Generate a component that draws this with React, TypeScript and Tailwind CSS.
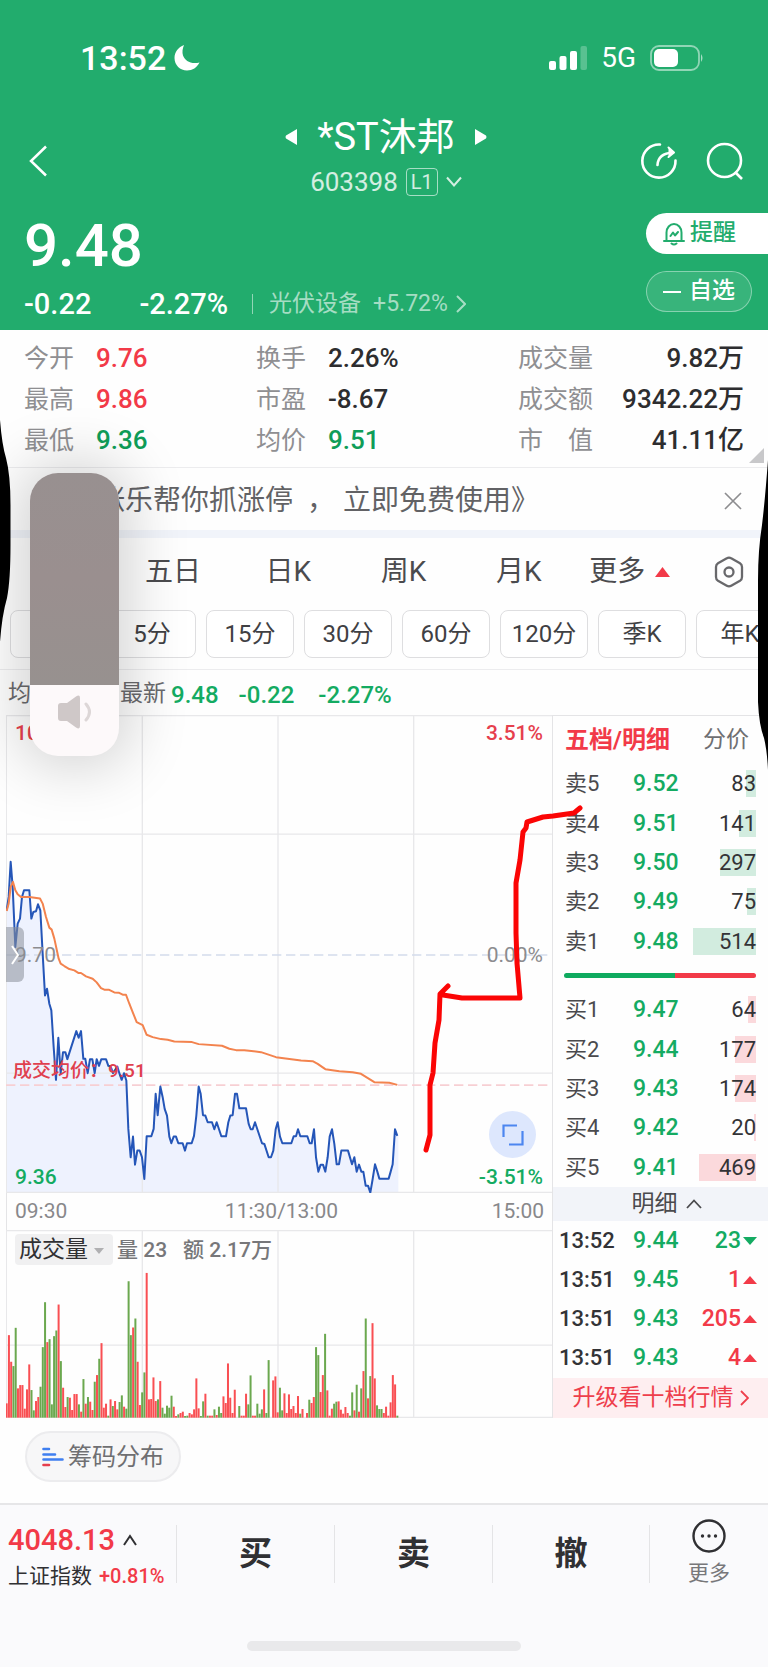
import React from "react";

const PRICE_POINTS =
  "22,630 28,590 34,485 40,560 48,740 55,670 62,655 68,590 74,570 90,570 96,655 102,635 110,633 116,612 123,630 130,760 137,885 143,865 150,910 156,930 163,1040 170,1138 177,1012 184,1118 191,1055 198,1055 204,1076 231,992 238,1012 245,992 252,1075 258,1075 265,1118 272,1076 279,1076 286,1118 292,1076 299,1096 306,1076 320,1076 327,1096 334,1098 341,1118 354,1098 360,1118 367,1138 374,1118 381,1140 387,1285 394,1370 401,1308 407,1392 414,1350 421,1350 428,1370 435,1435 442,1307 456,1307 463,1285 469,1180 475,1244 483,1158 490,1190 496,1225 503,1245 510,1308 516,1328 523,1308 530,1308 537,1328 550,1328 557,1350 563,1328 577,1328 584,1306 591,1245 598,1158 604,1180 611,1244 618,1245 625,1265 638,1265 645,1286 652,1265 666,1307 680,1307 687,1265 693,1245 700,1244 707,1180 713,1180 720,1223 740,1223 748,1270 754,1286 760,1286 767,1265 788,1328 795,1330 808,1370 815,1370 822,1350 829,1286 835,1265 842,1308 849,1328 876,1328 883,1307 890,1307 896,1286 903,1307 924,1307 931,1328 937,1328 944,1286 950,1370 957,1413 964,1392 971,1392 978,1413 985,1370 991,1308 998,1286 1005,1330 1012,1391 1019,1391 1026,1350 1046,1350 1058,1391 1065,1370 1072,1413 1079,1392 1086,1413 1092,1413 1099,1455 1106,1455 1113,1476 1120,1435 1127,1391 1134,1413 1140,1434 1168,1434 1174,1413 1180,1391 1187,1286 1194,1306";

const AVERAGE_POINTS =
  "22,632 28,610 34,560 41,545 48,570 55,582 65,590 90,590 122,595 130,610 140,650 150,682 157,688 165,715 178,775 184,790 195,797 210,806 225,810 238,818 245,818 260,828 280,835 292,846 305,863 315,868 328,868 345,876 358,877 370,883 380,883 390,910 400,935 412,965 430,974 442,1003 460,1010 485,1016 505,1018 525,1023 578,1025 598,1031 668,1036 690,1045 710,1049 735,1049 785,1055 830,1070 905,1080 940,1082 955,1090 978,1106 1020,1112 1060,1115 1085,1120 1125,1145 1170,1147 1194,1153";

// One entry per traded minute: direction (r = up, g = down) and bar height.
const VOLUMES =
  "r43 r248 r168 g155 g270 r88 r98 r98 r27 r85 r160 g83 g22 r50 r62 g93 g212 g347 r227 g236 g40 g245 g262 r340 g170 r90 r32 g62 r60 r23 r71 r71 g40 r18 g116 r42 g62 r48 r23 g108 r128 g177 r224 r30 r42 g6 r55 g35 r50 r25 g47 g67 r33 g27 g410 g248 r271 g298 r168 r38 g76 g136 r435 r55 r56 r121 r50 g55 r110 g30 g12 g36 g30 g66 r33 r5 g10 r14 r18 g5 g6 r14 r10 r25 r118 r28 g5 g49 r72 g6 r6 r6 g25 r8 g33 g14 r64 r44 r163 r60 r14 r84 r0 g35 r6 r6 r72 g40 g127 r6 r6 g42 g12 g25 r85 g14 g173 r0 r112 r124 r16 g90 g22 r73 r14 r70 r26 r35 r14 r65 g12 r26 r0 r14 g54 r44 r62 g212 g188 r77 r128 g252 r82 r6 r27 g42 g48 r49 r24 r12 r32 r14 g6 g76 r22 g99 r18 g88 r140 g298 r58 g125 r284 r118 g37 g26 g26 r14 r33 r6 r46 r128 r100 g6".split(
    " "
  );

const STATS = [
  ["今开", "9.76", "text-[#f23a48]", "换手", "2.26%", "text-[#2d2d2f]", "成交量", "9.82万"],
  ["最高", "9.86", "text-[#f23a48]", "市盈", "-8.67", "text-[#2d2d2f]", "成交额", "9342.22万"],
  ["最低", "9.36", "text-[#0f9d58]", "均价", "9.51", "text-[#0f9d58]", "市　值", "41.11亿"],
];

const SELLS: [string, string, string, number][] = [
  ["卖5", "9.52", "83", 10],
  ["卖4", "9.51", "141", 17],
  ["卖3", "9.50", "297", 36],
  ["卖2", "9.49", "75", 9],
  ["卖1", "9.48", "514", 63],
];
const BUYS: [string, string, string, number][] = [
  ["买1", "9.47", "64", 8],
  ["买2", "9.44", "177", 21],
  ["买3", "9.43", "174", 21],
  ["买4", "9.42", "20", 2],
  ["买5", "9.41", "469", 57],
];
const TRADES: [string, string, string, boolean][] = [
  ["13:52", "9.44", "23", false],
  ["13:51", "9.45", "1", true],
  ["13:51", "9.43", "205", true],
  ["13:51", "9.43", "4", true],
];

function StatusBar() {
  return (
    <div className="flex h-[116px] items-center justify-between pl-20 pr-16">
      <div className="flex items-center gap-2 text-[34px] leading-10 font-medium">
        <span>13:52</span>
        <svg className="h-[26px] w-[26px]" viewBox="0 0 26 26" fill="currentColor" aria-hidden="true">
          <path d="M10 0C8.500 3.500 8 7 9 10.500C11 16 17 19.500 25.500 17.500C23 22.500 18.500 25.500 13 25.500C6 25.500 0.500 20 0.500 13C0.500 7 4.500 2 10 0Z" />
        </svg>
      </div>
      <div className="flex items-center gap-[14px]">
        <svg className="h-6 w-[38px]" viewBox="0 0 38 24" fill="currentColor" aria-hidden="true">
          <rect x="0" y="15" width="7" height="9" rx="2" />
          <rect x="10.500" y="10" width="7" height="14" rx="2" />
          <rect x="21" y="5" width="7" height="19" rx="2" />
          <rect x="31.500" y="0" width="6.500" height="24" rx="2" opacity=".25" />
        </svg>
        <span className="text-[28px] leading-8">5G</span>
        <svg className="h-[26px] w-[54px]" viewBox="0 0 54 26" fill="none" aria-hidden="true">
          <rect x="1" y="1" width="48" height="24" rx="8" stroke="#fff" strokeOpacity=".5" strokeWidth="1.800" />
          <rect x="4" y="4" width="24" height="18" rx="5" fill="#fff" />
          <path d="M51 9q3 4 0 8z" fill="#fff" fillOpacity=".6" />
        </svg>
      </div>
    </div>
  );
}

function Header() {
  return (
    <header className="bg-[#22ac6d] text-white">
      <StatusBar />
      <div className="grid h-[88px] grid-cols-[1fr_auto_1fr] items-center pl-7 pr-6">
        <button type="button" aria-label="返回" className="w-6">
          <svg className="h-8 w-5" viewBox="0 0 20 32" fill="none" stroke="currentColor" strokeWidth="2.500" aria-hidden="true">
            <path d="M18 1.500L3 16L18 30.500" />
          </svg>
        </button>
        <div className="flex flex-col items-center">
          <div className="flex items-center gap-5">
            <button type="button" aria-label="上一只">
              <svg className="h-4 w-3" viewBox="0 0 12 16" fill="currentColor" aria-hidden="true">
                <path d="M12 0v16L1 9.500Q0 8 1 6.500Z" />
              </svg>
            </button>
            <h1 className="text-[38px] leading-[42px]">*ST沐邦</h1>
            <button type="button" aria-label="下一只">
              <svg className="h-4 w-3" viewBox="0 0 12 16" fill="currentColor" aria-hidden="true">
                <path d="M0 0v16L11 9.500Q12 8 11 6.500Z" />
              </svg>
            </button>
          </div>
          <button type="button" className="flex h-12 items-center gap-2 text-[26px] leading-7 text-white/80">
            <span>603398</span>
            <span className="flex h-7 items-center rounded border border-white/60 px-1 text-[20px]">L1</span>
            <svg className="h-3 w-4" viewBox="0 0 16 12" fill="none" stroke="currentColor" strokeWidth="2" aria-hidden="true">
              <path d="M1 1.500L8 9.500L15 1.500" />
            </svg>
          </button>
        </div>
        <div className="flex items-center justify-end gap-7">
          <button type="button" aria-label="分享">
            <svg className="h-[38px] w-[38px]" viewBox="0 0 38 38" fill="none" stroke="currentColor" strokeWidth="2.600" strokeLinecap="round" strokeLinejoin="round" aria-hidden="true">
              <path d="M20 2.500A16.600 16.600 0 1 0 35.500 18.500" />
              <path d="M17.500 23C18 15 23 11 33 10.500" />
              <path d="M28.500 5.500L34 10.500L28.500 15" fill="currentColor" strokeWidth="2" />
            </svg>
          </button>
          <button type="button" aria-label="搜索">
            <svg className="h-[38px] w-[38px]" viewBox="0 0 38 38" fill="none" stroke="currentColor" strokeWidth="2.600" aria-hidden="true">
              <circle cx="18.500" cy="18.500" r="16.500" />
              <path d="M29 30L36 37" />
            </svg>
          </button>
        </div>
      </div>
      <div className="flex h-[126px] items-start justify-between pl-6">
        <div>
          <p className="mt-3 text-[60px] leading-[60px] font-medium">9.48</p>
          <div className="mt-3 flex items-center text-[29px] leading-8 font-medium">
            <span>-0.22</span>
            <span className="ml-12">-2.27%</span>
            <span className="ml-6 h-5 w-px bg-white/50" />
            <a href="#sector" className="ml-4 flex items-center text-[23px] font-normal text-white/60">
              <span>光伏设备</span>
              <span className="ml-3">+5.72%</span>
              <svg className="ml-2 h-[18px] w-[10px]" viewBox="0 0 10 18" fill="none" stroke="currentColor" strokeWidth="2" aria-hidden="true">
                <path d="M1 1L9 9L1 17" />
              </svg>
            </a>
          </div>
        </div>
        <div className="mt-[9px] flex flex-col gap-[17px]">
          <button type="button" className="flex h-[41px] w-[122px] items-center gap-1 rounded-l-full bg-white pl-4 text-[23px] font-medium text-[#22ac6d]">
            <svg className="h-6 w-6" viewBox="0 0 24 24" fill="none" stroke="currentColor" strokeWidth="2" strokeLinecap="round" strokeLinejoin="round" aria-hidden="true">
              <path d="M4.500 18V10.500a7.500 8.500 0 0 1 15 0V18M2 19h20M9.500 21.500q2.500 2 5 0M8.500 14l2.500-3.500 2 3L16 10" />
            </svg>
            提醒
          </button>
          <button type="button" className="flex h-[41px] w-[106px] items-center gap-2 rounded-full border border-white/40 bg-white/10 pl-4 text-[23px] font-medium">
            <span className="h-[2px] w-[18px] bg-white" />
            自选
          </button>
        </div>
      </div>
    </header>
  );
}

function Stats() {
  return (
    <section className="relative border-b border-[#ececee] px-6 pt-2 pb-[6px]">
      <table className="w-full text-[26px] leading-[41px]">
        <tbody>
          {STATS.map((r) => (
            <tr key={r[0]}>
              <th scope="row" className="w-[72px] text-left text-[25px] font-normal text-[#8f8f92]">{r[0]}</th>
              <td className={"w-[160px] font-medium " + r[2]}>{r[1]}</td>
              <th scope="row" className="w-[72px] text-left text-[25px] font-normal text-[#8f8f92]">{r[3]}</th>
              <td className={"w-[190px] font-medium " + r[5]}>{r[4]}</td>
              <th scope="row" className="text-left text-[25px] font-normal whitespace-nowrap text-[#8f8f92]">{r[6]}</th>
              <td className="text-right font-medium whitespace-nowrap text-[#2d2d2f]">{r[7]}</td>
            </tr>
          ))}
        </tbody>
      </table>
      <svg className="absolute right-1 bottom-1 h-[15px] w-[15px]" viewBox="0 0 15 15" fill="#c8c8ca" aria-hidden="true">
        <path d="M15 0v15H0z" />
      </svg>
    </section>
  );
}

function Banner() {
  return (
    <section className="flex h-[70px] items-center justify-between border-b-8 border-[#f1f4fa] pt-1 pr-[26px] pl-[97px] text-[28px] text-[#626265]">
      <a href="#promo" className="flex">
        <span>涨乐帮你抓涨停</span>
        <span className="mr-2 ml-[14px]">，</span>
        <span>立即免费使用》</span>
      </a>
      <button type="button" aria-label="关闭">
        <svg className="h-[18px] w-[18px]" viewBox="0 0 18 18" stroke="#8d8d90" strokeWidth="1.700" aria-hidden="true">
          <path d="M1 1L17 17M17 1L1 17" />
        </svg>
      </button>
    </section>
  );
}

function Periods() {
  return (
    <>
      <nav className="grid h-[72px] grid-cols-[repeat(5,115fr)_106fr_85fr] items-center pb-1 text-[28px] text-[#4b4b4e]">
        <button type="button" aria-label="分时" className="h-full" />
        <button type="button">五日</button>
        <button type="button">日K</button>
        <button type="button">周K</button>
        <button type="button">月K</button>
        <button type="button" className="flex items-center justify-center gap-[10px] whitespace-nowrap">
          更多
          <svg className="h-[10px] w-[15px]" viewBox="0 0 15 10" fill="#f23a48" aria-hidden="true">
            <path d="M7.500 0L15 10H0z" />
          </svg>
        </button>
        <button type="button" aria-label="设置" className="flex justify-center pl-2">
          <svg className="h-8 w-[30px]" viewBox="0 0 30 32" fill="none" stroke="#68686b" strokeWidth="2.300" strokeLinejoin="round" aria-hidden="true">
            <path d="M12.800 2.300Q15 1 17.200 2.300L26 7.200Q28 8.400 28 11V21Q28 23.600 26 24.800L17.200 29.700Q15 31 12.800 29.700L4 24.800Q2 23.600 2 21V11Q2 8.400 4 7.200Z" />
            <circle cx="15" cy="16" r="4.500" />
          </svg>
        </button>
      </nav>
      <div className="mr-[9px] flex h-[60px] gap-[10px] overflow-hidden border-b border-[#ececee] pl-[10px] text-[24px] text-[#404043]">
        {["", "5分", "15分", "30分", "60分", "120分", "季K", "年K"].map((t, i) => (
          <button key={i} type="button" aria-label={t || "1分"} className="h-12 w-[88px] shrink-0 rounded-lg border border-[#dedee0] bg-white">
            {t}
          </button>
        ))}
      </div>
      <div className="flex h-[45px] items-center pt-1 pl-2 text-[24px] font-medium text-[#14ab62]">
        <span className="w-28 text-[23px] font-normal text-[#6a6a6d]">均价</span>
        <span className="mr-[5px] text-[23px] font-normal text-[#6a6a6d]">最新</span>
        <span>9.48</span>
        <span className="ml-5">-0.22</span>
        <span className="ml-6">-2.27%</span>
      </div>
    </>
  );
}

function PriceChart() {
  return (
    <div className="relative h-[478px] text-[21px] leading-6 font-medium">
      <svg className="block h-full w-full" viewBox="20 45 1638 1432" preserveAspectRatio="none" fill="none" role="img" aria-label="分时走势">
        <polygon points={"20,1477 " + PRICE_POINTS + " 1197,1306 1197,1477"} fill="#eef2fe" />
        <path d="M20 47H1658M20 402H1658M20 1118H1658M20 1475H1658M21 45V1477M429 45V1477M836 45V1477M1243 45V1477" stroke="#e8e8ea" strokeWidth="4" />
        <path d="M20 764H1658" stroke="#d3dceb" strokeWidth="5" strokeDasharray="28 14" />
        <path d="M20 1154H1658" stroke="#f7cfd3" strokeWidth="5" strokeDasharray="28 14" />
        <polyline points={PRICE_POINTS} stroke="#2556b8" strokeWidth="6" strokeLinejoin="round" />
        <polyline points={AVERAGE_POINTS} stroke="#f3834e" strokeWidth="6" strokeLinejoin="round" />
      </svg>
      <span className="absolute top-[6px] left-[9px] text-[#e63f4d]">10.04</span>
      <span className="absolute top-[6px] right-[9px] text-[#e63f4d]">3.51%</span>
      <span className="absolute top-[228px] left-[9px] font-normal text-[#8c8c8f]">9.70</span>
      <span className="absolute top-[228px] right-[9px] font-normal text-[#8c8c8f]">0.00%</span>
      <span className="absolute top-[344px] left-[7px] text-[19px] text-[#e0404e]">成交均价：9.51</span>
      <span className="absolute bottom-1 left-[9px] text-[#14ab62]">9.36</span>
      <span className="absolute right-[9px] bottom-1 text-[#14ab62]">-3.51%</span>
      <button type="button" aria-label="展开" className="absolute top-[212px] left-0 flex h-[55px] w-[18px] items-center justify-center rounded-r-md bg-[#8a8f99]/55">
        <svg className="h-5 w-2" viewBox="0 0 8 20" fill="none" stroke="#fff" strokeWidth="2" aria-hidden="true">
          <path d="M1 1L7 10L1 19" />
        </svg>
      </button>
      <button type="button" aria-label="全屏" className="absolute right-4 bottom-[35px] flex h-[47px] w-[47px] items-center justify-center rounded-full bg-[#dde7fd]">
        <svg className="h-[22px] w-[22px]" viewBox="0 0 22 22" fill="none" stroke="#4c86f0" strokeWidth="2.200" aria-hidden="true">
          <path d="M1.500 13V1.500H15M7 20.500H20.500V7" />
        </svg>
      </button>
    </div>
  );
}

function VolumeChart() {
  return (
    <div className="relative h-[188px] text-[21px] font-medium text-[#77777a]">
      <svg className="block h-full w-full" viewBox="20 147 1638 565" preserveAspectRatio="none" role="img" aria-label="成交量">
        <path d="M20 149H1658M20 493H1658M20 710H1658M21 147V712M429 147V712M836 147V712M1243 147V712" stroke="#e8e8ea" strokeWidth="4" />
        {VOLUMES.map((v, i) => {
          const h = Number(v.slice(1));
          return <rect key={i} x={19 + i * 6.775} y={711 - h} width="6" height={h} fill={v[0] === "r" ? "#f94f53" : "#6ba84f"} />;
        })}
      </svg>
      <div className="absolute top-1 left-[9px] flex items-center">
        <div className="relative">
          <select aria-label="指标" className="h-[31px] w-[98px] appearance-none rounded-[4px] bg-[#f0f0f1] pl-1 text-[23px] leading-[31px] font-normal text-[#303033]">
            <option>成交量</option>
          </select>
          <svg className="pointer-events-none absolute top-[14px] right-[9px] h-[6px] w-[10px]" viewBox="0 0 10 6" fill="#b0b0b2" aria-hidden="true">
            <path d="M0 0h10L5 6z" />
          </svg>
        </div>
        <span className="ml-1">量 23</span>
        <span className="ml-4">额 2.17万</span>
      </div>
    </div>
  );
}

function Book({ rows, sell }: { rows: [string, string, string, number][]; sell: boolean }) {
  return (
    <table className="h-[197px] w-full text-[23px] leading-[27px]">
      <tbody>
        {rows.map(([name, price, vol, w]) => (
          <tr key={name}>
            <th scope="row" className="w-20 pl-3 text-left text-[22px] font-normal text-[#4a4a4d]">{name}</th>
            <td className="font-medium text-[#14ab62]">{price}</td>
            <td className="pr-3 text-right text-[22px] text-[#333336]">
              <span className="relative block h-[27px]">
                <span className={"absolute top-0 right-0 h-full " + (sell ? "bg-[#d2ecdf]" : "bg-[#fbd9dc]")} style={{ width: w }} />
                <span className="relative">{vol}</span>
              </span>
            </td>
          </tr>
        ))}
      </tbody>
    </table>
  );
}

function SidePanel() {
  return (
    <aside className="border-l border-t border-[#e4e4e6]">
      <div className="flex h-12 items-center justify-between pr-[19px] pl-3 text-[23px]">
        <button type="button" className="text-[24px] font-bold text-[#f23a48]">五档/明细</button>
        <button type="button" className="text-[#6f6f72]">分价</button>
      </div>
      <Book rows={SELLS} sell />
      <div className="mr-3 ml-[11px] my-3 flex h-[5px] overflow-hidden rounded-full">
        <span className="grow-[11] bg-[#0faa5f]" />
        <span className="grow-[8] bg-[#f23a48]" />
      </div>
      <Book rows={BUYS} sell={false} />
      <button type="button" className="flex h-[34px] w-full items-center justify-center gap-2 bg-[#f2f4f9] pl-3 text-[23px] text-[#4a4a4d]">
        明细
        <svg className="h-[10px] w-4" viewBox="0 0 16 10" fill="none" stroke="currentColor" strokeWidth="1.800" aria-hidden="true">
          <path d="M1 9L8 1.500L15 9" />
        </svg>
      </button>
      <table className="h-[157px] w-full text-[23px] leading-7 font-medium">
        <tbody>
          {TRADES.map(([time, price, vol, up], i) => (
            <tr key={i}>
              <td className="w-20 pl-[6px] text-[22px] text-[#333336]">{time}</td>
              <td className="text-[#14ab62]">{price}</td>
              <td className={"pr-[11px] " + (up ? "text-[#f23a48]" : "text-[#14ab62]")}>
                <span className="flex items-center justify-end gap-[2px]">
                  {vol}
                  <svg className="h-2 w-[14px]" viewBox="0 0 14 8" fill="currentColor" aria-hidden="true">
                    <path d={up ? "M7 0L14 8H0z" : "M0 0H14L7 8z"} />
                  </svg>
                </span>
              </td>
            </tr>
          ))}
        </tbody>
      </table>
      <a href="#upgrade" className="flex h-10 items-center justify-center gap-[6px] bg-[#feeef0] text-[23px] whitespace-nowrap text-[#ee3f4c]">
        升级看十档行情
        <svg className="h-4 w-[9px]" viewBox="0 0 9 16" fill="none" stroke="currentColor" strokeWidth="1.800" aria-hidden="true">
          <path d="M1 1L8 8L1 15" />
        </svg>
      </a>
    </aside>
  );
}

function Market() {
  return (
    <section className="relative grid grid-cols-[minmax(0,1fr)_216px] pl-[6px]">
      <div>
        <PriceChart />
        <div className="flex h-[37px] items-center justify-between border-l border-[#e4e4e6] px-2 text-[21px] text-[#88888b]">
          <span>09:30</span>
          <span className="pl-1">11:30/13:00</span>
          <span>15:00</span>
        </div>
        <VolumeChart />
      </div>
      <SidePanel />
      <svg className="pointer-events-none absolute top-0 left-0 h-full w-full" viewBox="0 0 768 703" preserveAspectRatio="none" fill="none" stroke="#fb0505" strokeWidth="5" strokeLinecap="round" strokeLinejoin="round" aria-hidden="true">
        <path d="M580 93L574 98L553 101L543 102L527 107L526 113L523 117L520 145L516 168V218L517 248L520 283H462L443 280M448 271L440 279L439 305L435 328L433 358L430 370V420L426 435" />
      </svg>
    </section>
  );
}

function BottomBar() {
  return (
    <footer className="border-t-2 border-[#e6e6e8] bg-[#fafafc]">
      <div className="grid h-[98px] grid-cols-[176fr_158fr_158fr_157fr_119fr] items-center text-[#303033]">
        <a href="#index" className="flex flex-col gap-1 pt-2 pl-2 whitespace-nowrap">
          <span className="flex items-center gap-2 text-[29px] leading-8 font-medium text-[#f23a48]">
            4048.13
            <svg className="h-3 w-[14px]" viewBox="0 0 14 12" fill="none" stroke="#303033" strokeWidth="2" aria-hidden="true">
              <path d="M1 11L7 2L13 11" />
            </svg>
          </span>
          <span className="flex gap-[7px] text-[20px] leading-8">
            <span className="text-[21px]">上证指数</span>
            <span className="font-medium text-[#f23a48]">+0.81%</span>
          </span>
        </a>
        {["买", "卖", "撤"].map((t) => (
          <button key={t} type="button" className="h-[58px] border-l border-[#e4e4e6] text-[33px] font-bold">
            {t}
          </button>
        ))}
        <div className="flex h-[58px] items-center justify-center border-l border-[#e4e4e6]">
          <button type="button" className="flex flex-col items-center gap-1 text-[21px] leading-8 text-[#77777a]">
            <svg className="h-[34px] w-[34px]" viewBox="0 0 34 34" fill="#303033" aria-hidden="true">
              <circle cx="17" cy="17" r="15.500" fill="none" stroke="#303033" strokeWidth="2.400" />
              <circle cx="10.500" cy="17" r="1.700" />
              <circle cx="17" cy="17" r="1.700" />
              <circle cx="23.500" cy="17" r="1.700" />
            </svg>
            更多
          </button>
        </div>
      </div>
      <div className="flex h-16 items-end justify-center pb-4">
        <span className="h-[10px] w-[274px] rounded-full bg-[#e9e9eb]" />
      </div>
    </footer>
  );
}

function VolumeOverlay() {
  return (
    <div className="absolute top-[473px] left-[30px] flex h-[283px] w-[89px] flex-col overflow-hidden rounded-[28px] bg-[#fdf9fa] shadow-[0_0_60px_10px_rgba(0,0,0,0.18)]">
      <div className="h-[212px] bg-linear-to-b from-[#989090] via-[#9a8f8f] to-[#97918f]" />
      <div className="flex flex-1 justify-center pt-[10px]">
        <svg className="h-[34px] w-9" viewBox="0 0 36 34" aria-hidden="true">
          <path d="M4 8H10L19 1.500Q23 -1 23 3V31Q23 35 19 32.500L10 26H4Q1 26 1 23V11Q1 8 4 8Z" fill="#cfc8c8" />
          <path d="M29 9Q36 17 29 25" fill="none" stroke="#ddd7d7" strokeWidth="3" strokeLinecap="round" />
        </svg>
      </div>
    </div>
  );
}

export default function App() {
  return (
    <div className="relative overflow-hidden bg-[#fefefe] font-['Roboto','Noto_Sans_CJK_SC',sans-serif]">
      <Header />
      <Stats />
      <Banner />
      <Periods />
      <Market />
      <div className="flex h-[85px] items-start pt-[13px] pl-[25px]">
        <button type="button" className="flex h-[51px] items-center gap-1 rounded-full border-2 border-[#ececee] bg-[#f7f7f8] px-[15px] text-[24px] text-[#6f6f72]">
          <svg className="h-5 w-[22px]" viewBox="0 0 22 20" fill="none" strokeWidth="2.600" strokeLinecap="round" aria-hidden="true">
            <path d="M1.500 2H7M1.500 7.500H13M1.500 12.500H20.500" stroke="#3f7ff0" />
            <path d="M1.500 18H7" stroke="#e63f4d" />
          </svg>
          筹码分布
        </button>
      </div>
      <BottomBar />
      <VolumeOverlay />
      <svg className="pointer-events-none absolute top-[400px] left-0 h-[260px] w-3" viewBox="0 0 12 260" aria-hidden="true">
        <path d="M0 20Q2 45 6 58Q10.500 75 10.500 105V145Q10.500 180 7 198Q2 215 0 242Z" />
      </svg>
      <svg className="pointer-events-none absolute top-[440px] right-0 h-[340px] w-3" viewBox="0 0 12 340" aria-hidden="true">
        <path d="M12 20Q9 60 6 85Q2 110 2 140V262Q3 285 8 298Q11 310 12 330Z" />
      </svg>
    </div>
  );
}
